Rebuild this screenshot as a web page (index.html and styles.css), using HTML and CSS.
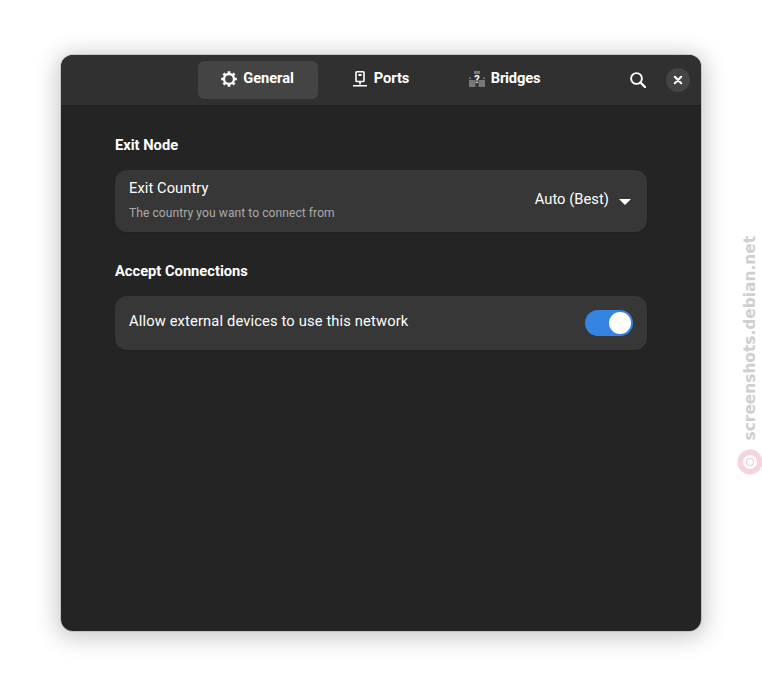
FILE: index.html
```html
<!DOCTYPE html>
<html lang="en">
<head>
<meta charset="utf-8">
<title>Preferences</title>
<link rel="stylesheet" href="styles.css">
</head>
<body>
<div class="window">
  <header class="headerbar">
    <nav class="tabs">
      <div class="tab tab-general active">
        <svg class="icon" viewBox="0 0 16 16"><g stroke="#fff" stroke-width="2.700"><path d="M8 .2v3M8 12.800v3M.2 8h3M12.800 8h3M2.500 2.500l2.200 2.200M11.300 11.300l2.200 2.200M13.500 2.500l-2.200 2.200M4.700 11.300l-2.200 2.200"/></g><circle cx="8" cy="8" r="5" fill="none" stroke="#fff" stroke-width="2.300"/></svg>
        <span>General</span>
      </div>
      <div class="tab tab-ports">
        <svg class="icon" viewBox="0 0 16 16"><path fill="none" stroke="#fff" stroke-width="1.600" d="M4.800.8h6.400c.5 0 .8.300.8.800v8.100c0 .5-.3.800-.8.800H4.800c-.5 0-.8-.3-.8-.8V1.600c0-.5.300-.8.800-.8z"/><path fill="#fff" d="M6.500 3h3v2h-3zM7.200 11h1.600v2.500H7.200zM1 14h14v1.600H1z"/></svg>
        <span>Ports</span>
      </div>
      <div class="tab tab-bridges">
        <svg class="icon" viewBox="0 0 16 16"><path fill="#777" d="M5 0h6v3H5zM0 9h6.500v7H0zM9.500 9H16v7H9.500zM0 6.500h2V8H0zM14 6.500h2V8h-2z"/><text x="8" y="11.500" class="q">?</text></svg>
        <span>Bridges</span>
      </div>
    </nav>
    <svg class="search" viewBox="0 0 16 16"><circle cx="6.500" cy="6.500" r="5.400" fill="none" stroke="#fff" stroke-width="1.900"/><path d="M10.500 10.500l4.700 4.700" fill="none" stroke="#fff" stroke-width="2.200" stroke-linecap="round"/></svg>
    <button class="close"><svg viewBox="0 0 16 16"><path d="M4.800 4.800l6.400 6.400m0-6.400l-6.400 6.400" fill="none" stroke="#fff" stroke-width="2.100" stroke-linecap="round"/></svg></button>
  </header>
  <main class="content">
    <h2 class="group-title">Exit Node</h2>
    <section class="row row-country">
      <div class="row-text">
        <div class="row-title">Exit Country</div>
        <div class="row-sub">The country you want to connect from</div>
      </div>
      <div class="value">Auto (Best)</div>
      <span class="caret"></span>
    </section>
    <h2 class="group-title second">Accept Connections</h2>
    <section class="row row-network">
      <div class="row-title row-title-solo">Allow external devices to use this network</div>
      <div class="switch"><span class="knob"></span></div>
    </section>
  </main>
</div>
<div class="watermark">
  <span class="wm-text">screenshots.debian.net</span>
  <svg class="wm-logo" viewBox="0 0 26 26"><circle cx="13" cy="13" r="12.500" fill="#f6d3df"/><circle cx="13" cy="13" r="7" fill="#fff"/><circle cx="13" cy="13" r="3.500" fill="none" stroke="#f3cbd9" stroke-width="1.200"/></svg>
</div>
</body>
</html>
```
FILE: styles.css
```css
* { box-sizing: border-box; }
html, body { margin: 0; padding: 0; }
body {
  width: 762px;
  height: 698px;
  background: #fff;
  font-family: Roboto, "Liberation Sans", sans-serif;
  color: #fff;
  overflow: hidden;
  position: relative;
  padding: 55px 0 0 61px;
}
.window {
  width: 640px;
  height: 576px;
  background: #242424;
  border-radius: 12px;
  display: flex;
  flex-direction: column;
  box-shadow: 0 3px 22px 5px rgba(0,0,0,.2), 0 0 0 1px rgba(0,0,0,.12);
}
.headerbar {
  height: 50px;
  flex: none;
  background: #303030;
  border-radius: 12px 12px 0 0;
  box-shadow: 0 1px 0 #1f1f1f;
  display: flex;
  align-items: center;
  padding-left: 137px;
  padding-right: 11px;
}
.tabs { display: flex; align-items: center; margin-top: -1px; }
.tab {
  height: 38px;
  display: flex;
  align-items: center;
  justify-content: center;
  gap: 6px;
  font-size: 14.700px;
  font-weight: 700;
  letter-spacing: -.06px;
  border-radius: 6px;
  padding-bottom: 4px;
}
.tab-general { width: 120px; padding-right: 1px; }
.tab-ports { width: 126px; padding-right: 1px; }
.tab-bridges { width: 119px; padding-left: 2px; letter-spacing: -.16px; }
.tab.active { background: #444; }
.icon { width: 16px; height: 16px; margin-top: 3px; flex: none; }
.q { font: 700 11px Roboto, sans-serif; fill: #fff; text-anchor: middle; }
.search { width: 16px; height: 16px; margin-left: 67px; }
.close {
  width: 24px;
  height: 24px;
  padding: 4px;
  margin-left: auto;
  border: 0;
  border-radius: 50%;
  background: #444;
}
.close svg { display: block; width: 16px; height: 16px; }
.content {
  flex: 1;
  padding: 31px 54px 0 54px;
}
.group-title {
  margin: 0;
  font-size: 14.700px;
  line-height: 18px;
  font-weight: 700;
}
.group-title.second { margin-top: 30px; }
.row {
  display: flex;
  align-items: center;
  background: #373737;
  border-radius: 12px;
  padding: 0 14px;
  margin-top: 16px;
  box-shadow: 0 1px 2px rgba(0,0,0,.12);
}
.row-country { height: 62px; }
.row-network { height: 54px; justify-content: space-between; }
.row-text { flex: 1; margin-top: -4px; }
.row-title { font-size: 14.700px; line-height: 18px; font-weight: 400; letter-spacing: .07px; }
.row-title-solo { letter-spacing: .15px; margin-top: -4px; }
.row-sub { font-size: 12.100px; line-height: 14px; color: #a9a9a9; margin-top: 9px; letter-spacing: .05px; }
.value { font-size: 14.700px; margin-top: -4px; letter-spacing: .05px; }
.caret {
  width: 0;
  height: 0;
  margin-left: 10px;
  margin-right: 2px;
  margin-top: 2px;
  border-left: 6px solid transparent;
  border-right: 6px solid transparent;
  border-top: 6px solid #fff;
}
.switch {
  width: 48px;
  height: 26px;
  border-radius: 13px;
  background: #3584e4;
  padding: 2px;
  display: flex;
  justify-content: flex-end;
}
.knob { width: 22px; height: 22px; border-radius: 50%; background: #fff; }
.watermark {
  position: absolute;
  left: 737px;
  top: 236px;
  width: 26px;
  display: flex;
  flex-direction: column;
  align-items: center;
  gap: 9px;
}
.wm-text {
  writing-mode: vertical-rl;
  transform: rotate(180deg);
  font-family: "DejaVu Sans", sans-serif;
  font-weight: 700;
  font-size: 15.400px;
  line-height: 18px;
  color: #cfcfcf;
}
.wm-logo { width: 26px; height: 26px; flex: none; }
```
